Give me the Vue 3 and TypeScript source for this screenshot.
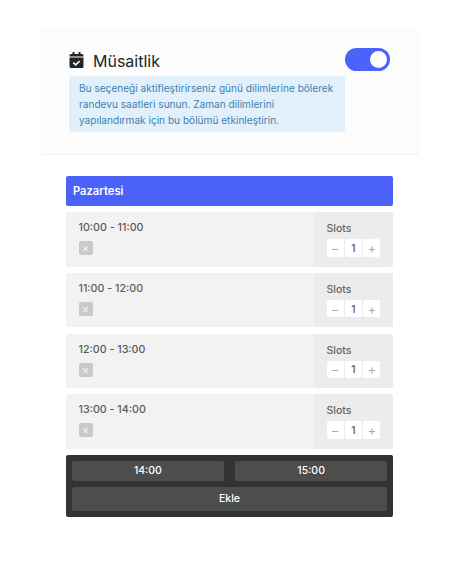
<script setup lang="ts">
const rows: string[] = ['10:00 - 11:00', '11:00 - 12:00', '12:00 - 13:00', '13:00 - 14:00']
</script>

<template>
  <div class="page">
    <section class="card">
      <div class="left">
        <div class="title">
          <svg class="cal" viewBox="0 0 14 16" width="15" height="16" aria-hidden="true">
            <path fill="#212529" d="M3 0h2v2h4V0h2v2h1.500A1.500 1.500 0 0 1 14 3.500V4.600H0V3.500A1.500 1.500 0 0 1 1.500 2H3zM0 5.600h14v8.900a1.500 1.500 0 0 1-1.500 1.500h-11A1.500 1.500 0 0 1 0 14.500z" />
            <path fill="none" stroke="#fff" stroke-width="1.600" d="M3.800 10.600l2.400 2.300 4-3.900" />
          </svg>
          <span>Müsaitlik</span>
        </div>
        <p class="info">Bu seçeneği aktifleştirirseniz günü dilimlerine bölerek randevu saatleri sunun. Zaman dilimlerini yapılandırmak için bu bölümü etkinleştirin.</p>
      </div>
      <div class="toggle"><span class="knob"></span></div>
    </section>

    <section class="day">
      <div class="day-head">Pazartesi</div>
      <div class="rows">
        <div v-for="r in rows" :key="r" class="row">
          <div class="row-main">
            <div class="time">{{ r }}</div>
            <span class="remove">×</span>
          </div>
          <div class="slots">
            <div class="slots-label">Slots</div>
            <div class="stepper">
              <span class="step">−</span>
              <span class="step val">1</span>
              <span class="step">+</span>
            </div>
          </div>
        </div>
      </div>
      <div class="dark">
        <div class="times">
          <button class="btn small">14:00</button>
          <button class="btn small">15:00</button>
        </div>
        <button class="btn add">Ekle</button>
      </div>
    </section>
  </div>
</template>

<style scoped>
.page {
  width: 459px;
  height: 561px;
  box-sizing: border-box;
  padding-top: 27px;
  background: #fff;
  font-family: Inter, "Noto Sans", sans-serif;
  overflow: hidden;
}
.card {
  margin-left: 41px;
  width: 378px;
  height: 128px;
  box-sizing: border-box;
  padding: 21px 29px 0 28px;
  background: #fcfcfc;
  border-bottom: 1px solid #f2f2f2;
  display: flex;
  justify-content: space-between;
  align-items: flex-start;
}
.left { width: 276px; }
.title {
  display: flex;
  align-items: center;
  gap: 9px;
  height: 25px;
  margin-bottom: 3px;
  font-size: 16px;
  color: #212529;
}
.cal { flex: none; margin-top: -2px; }
.info {
  margin: 0;
  padding: 3.500px 6px 0 10px;
  height: 56px;
  box-sizing: border-box;
  background: #e2f0fb;
  border-radius: 2px;
  font-size: 10.100px;
  line-height: 16.200px;
  color: #4080b0;
}
.toggle {
  width: 45px;
  height: 23px;
  border-radius: 12px;
  background: #4b63f9;
  display: flex;
  align-items: center;
  justify-content: flex-end;
  padding-right: 3px;
  box-sizing: border-box;
}
.knob {
  width: 17px;
  height: 17px;
  border-radius: 50%;
  background: #fff;
}
.day {
  margin: 21px 0 0 66px;
  width: 327px;
  display: flex;
  flex-direction: column;
  gap: 6px;
}
.day-head {
  height: 30px;
  box-sizing: border-box;
  padding-left: 7px;
  display: flex;
  align-items: center;
  background: #4b61f8;
  border-radius: 2px;
  color: #fff;
  font-size: 11.200px;
  font-weight: 600;
}
.rows {
  display: flex;
  flex-direction: column;
  gap: 6.250px;
}
.row {
  height: 54.500px;
  display: flex;
  background: #f2f2f2;
  border-radius: 2px;
  overflow: hidden;
}
.row-main {
  flex: 1;
  padding: 9px 0 0 12.500px;
}
.time {
  font-size: 10.700px;
  font-weight: 500;
  color: #5a5a5a;
  line-height: 14px;
}
.remove {
  margin-top: 6px;
  width: 14px;
  height: 14px;
  display: flex;
  align-items: center;
  justify-content: center;
  background: #c9c9c9;
  border-radius: 2px;
  color: #f2f2f2;
  font-size: 12px;
  line-height: 1;
}
.slots {
  width: 79px;
  box-sizing: border-box;
  padding: 10px 0 0 12.500px;
  background: #ececec;
}
.slots-label {
  font-size: 10.500px;
  font-weight: 500;
  color: #666;
  line-height: 13px;
  margin-bottom: 4px;
}
.stepper { display: flex; gap: 1px; }
.step {
  width: 17.300px;
  height: 17.500px;
  background: #fff;
  border-radius: 2px;
  display: flex;
  align-items: center;
  justify-content: center;
  font-size: 13px;
  color: #aaa;
}
.val { color: #666; font-weight: 600; font-size: 10px; }
.dark {
  height: 62px;
  box-sizing: border-box;
  padding: 6px;
  background: #333;
  border-radius: 2px;
  display: flex;
  flex-direction: column;
  gap: 6px;
}
.times {
  display: grid;
  grid-template-columns: 1fr 1fr;
  gap: 11.500px;
}
.btn {
  border: none;
  padding: 0;
  background: #4d4d4d;
  color: #fff;
  border-radius: 2px;
  font-family: inherit;
  font-weight: 500;
  font-size: 10.500px;
}
.small { height: 20px; }
.add { height: 24px; }
</style>
